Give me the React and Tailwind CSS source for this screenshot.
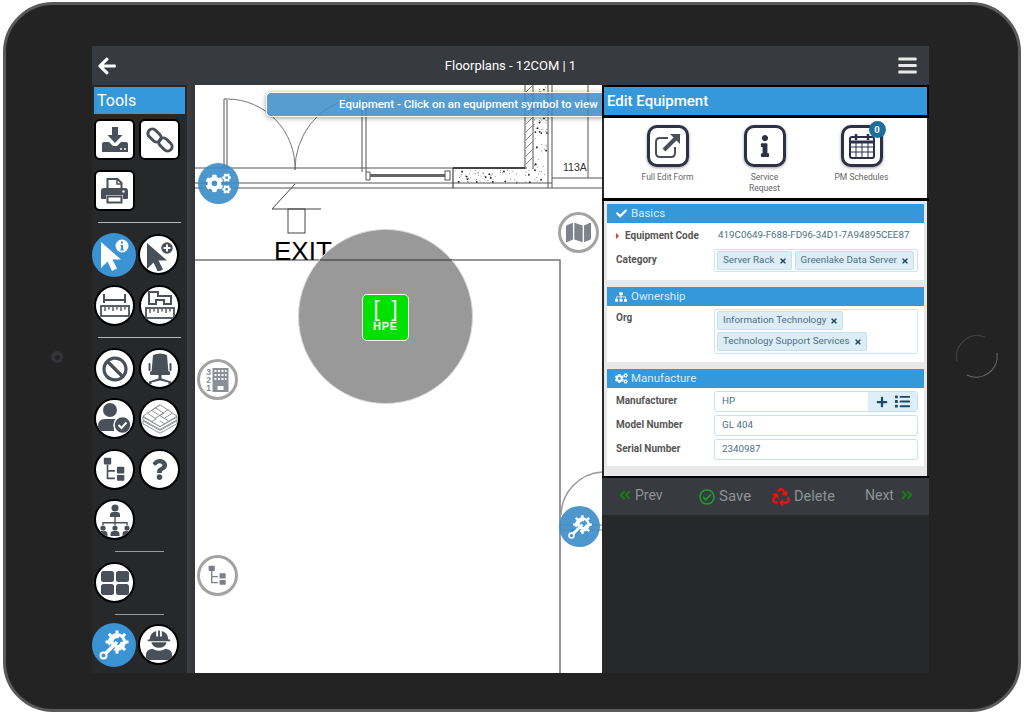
import {
  FaAngleDoubleLeft,
  FaAngleDoubleRight,
  FaArrowLeft,
  FaBan,
  FaBars,
  FaCheck,
  FaCogs,
  FaInfo,
  FaList,
  FaMap,
  FaPlus,
  FaQuestion,
  FaRecycle,
  FaRegCheckCircle,
  FaSitemap,
  FaTimes,
} from "react-icons/fa";

const iconGray = "#4a505a";
const cursorPath = "M1 1v26l6.500-6.500L12 30l5-2.500-4.500-9H21z";

const GearWrench = ({ size = 30 }) => (
  <svg width={size} height={size} viewBox="0 0 32 32" fill="none">
    <g stroke="#fff">
      {[0, 45, 90, 135, 180, 225, 270, 315].map((a) => (
        <rect key={a} x="17.500" y="1.500" width="3" height="4" fill="#fff" stroke="none" transform={`rotate(${a} 19 13)`} />
      ))}
      <circle cx="19" cy="13" r="7.500" strokeWidth="3" />
      <path d="M5 27 L19 13" stroke="#3a93d3" strokeWidth="6" />
      <path d="M7 25 L19 13" strokeWidth="3.400" />
      <path d="M21 8 A5 5 0 1 0 24 13" strokeWidth="3" />
      <circle cx="5.500" cy="26.500" r="3" strokeWidth="2" fill="#3a93d3" />
    </g>
  </svg>
);

const SaveDrive = () => (
  <svg width="28" height="28" viewBox="0 0 28 28" fill={iconGray}>
    <path d="M11 1h6v8h4.500L14 17 6.500 9H11z" />
    <path d="M1 18q0-2 2-2h5l4 4h4l4-4h5q2 0 2 2v8H1z" />
    <circle cx="20" cy="23" r="1" fill="#fff" />
    <circle cx="24" cy="23" r="1" fill="#fff" />
  </svg>
);

const ChainLink = () => (
  <svg width="28" height="28" viewBox="0 0 28 28" fill="none" stroke={iconGray} strokeWidth="3">
    <rect x="1" y="5" width="15" height="9" rx="4.500" transform="rotate(45 8.500 9.500)" />
    <rect x="12" y="14" width="15" height="9" rx="4.500" transform="rotate(45 19.500 18.500)" />
  </svg>
);

const Printer = () => (
  <svg width="27" height="27" viewBox="0 0 27 27" fill="none">
    <path d="M6.500 12V2h10l4 4v6" stroke={iconGray} strokeWidth="2" />
    <path d="M16 2v5h5" stroke={iconGray} strokeWidth="1.500" />
    <path d="M3 11h21q3 0 3 3v7q0 1-1 1h-4v-4H5v4H1q-1 0-1-1v-7q0-3 3-3z" fill={iconGray} />
    <path d="M6.500 19.500h14v6h-14z" stroke={iconGray} strokeWidth="2" />
    <circle cx="22.500" cy="14.500" r="1.200" fill="#fff" />
  </svg>
);

const CursorInfo = () => (
  <svg width="34" height="34" viewBox="0 0 34 34" fill="#fff">
    <path d={cursorPath} transform="translate(3 3)" />
    <circle cx="25" cy="8" r="6.500" />
    <path d="M24 3.500h2v2h-2zM23.500 7H26v4.500h1v1h-4v-1h1V8h-.5z" fill="#3a93d3" />
  </svg>
);

const CursorAdd = () => (
  <svg width="32" height="32" viewBox="0 0 32 32" fill={iconGray}>
    <path d={cursorPath} transform="translate(3 3)" />
    <circle cx="24" cy="9" r="6.500" stroke="#fff" strokeWidth="1.500" />
    <path d="M23 5.500h2V8h2.500v2H25v2.500h-2V10h-2.500V8H23z" fill="#fff" />
  </svg>
);

const Ruler = () => (
  <svg width="30" height="12" viewBox="0 0 30 12" fill="none" stroke={iconGray}>
    <rect x="1" y="1" width="28" height="10" strokeWidth="1.800" />
    <path d="M5 2v4M9 2v2.500M13 2v4M17 2v2.500M21 2v4M25 2v2.500" strokeWidth="1.400" />
  </svg>
);

const RulerLine = () => (
  <div className="flex flex-col items-center gap-[2px] -mt-[1px]">
    <svg width="23" height="9" viewBox="0 0 23 9" fill="none" stroke={iconGray} strokeWidth="2">
      <path d="M1 0v9M22 0v9M1 6h21" />
    </svg>
    <Ruler />
  </div>
);

const RulerPlan = () => (
  <div className="flex flex-col items-center gap-[2px] -mt-[1px]">
    <svg width="24" height="14" viewBox="0 0 24 14" fill="none" stroke={iconGray} strokeWidth="2">
      <path d="M1 1h9v4h13v8h-7V9H8v4H1z" />
    </svg>
    <Ruler />
  </div>
);

const Chair = () => (
  <svg width="24" height="32" viewBox="0 0 24 32" fill={iconGray}>
    <path d="M5 2q7-3 14 0l1.500 18h-17z" />
    <rect x="0.500" y="10" width="2" height="8" rx="1" />
    <rect x="21.500" y="10" width="2" height="8" rx="1" />
    <rect x="2" y="18" width="20" height="4" rx="1.500" />
    <rect x="10.500" y="22" width="3" height="4" />
    <path d="M12 25 L1 28.500V31h2.500v-1.500l8.500-2 8.500 2V31H23v-2.500z" />
  </svg>
);

const UserCheck = () => (
  <svg width="35" height="33" viewBox="0 0 35 33" fill={iconGray}>
    <circle cx="13" cy="8" r="7" />
    <path d="M1 29v-5q0-7 7-7h9q4 0 5 2a10 10 0 0 0-5 10z" />
    <circle cx="25.500" cy="23" r="8.500" stroke="#fff" strokeWidth="1.500" />
    <path d="M21.500 23l3 3 5-5.500" fill="none" stroke="#fff" strokeWidth="2" />
  </svg>
);

const Tiles = () => (
  <svg width="36" height="32" viewBox="0 0 38 32" fill="#fff" stroke="#8a8d92" strokeWidth="1">
    <path d="M1 18l18 10 18-10v3L19 31 1 21z" />
    <path d="M1 14l18 10 18-10v3L19 27 1 17z" />
    <path d="M19 1l18 12-18 11L1 13z" />
    <path d="M10 7l18 11M19 1l-9 6M14 4l9 6-9 5M6 10l9 6-5 3M19 12l9-6M24 15l8-5M19 18l5 3" fill="none" />
  </svg>
);

const Tree = ({ color = iconGray, scale = 1 }) => (
  <svg width={28 * scale} height={30 * scale} viewBox="0 0 28 30" fill={color}>
    <rect x="1" y="1" width="9" height="8" rx="1" />
    <path d="M4.500 9h2v7h8v2h-8v7h8v2h-10z" />
    <rect x="17" y="12" width="9" height="8" rx="1" />
    <rect x="17" y="22" width="9" height="7" rx="1" />
  </svg>
);

const OrgChart = () => (
  <svg width="34" height="34" viewBox="0 0 34 34" fill={iconGray}>
    <circle cx="17" cy="5" r="3.500" />
    <path d="M12 14v-2q0-3 3-3h4q3 0 3 3v2z" />
    <path d="M16.300 14h1.400v5h12v3h-1.400v-1.600h-10.600V22h-1.400v-1.600H5.700V22H4.300v-3h12z" />
    {[5, 17, 29].map((x) => (
      <g key={x}>
        <circle cx={x} cy="25" r="2.600" />
        <path d={`M${x - 4.500} 33v-2q0-3 3-3h3q3 0 3 3v2z`} />
      </g>
    ))}
  </svg>
);

const Quad = () => (
  <svg width="28" height="24" viewBox="0 0 28 24" fill={iconGray}>
    <rect x="0" y="0" width="13" height="11" rx="2.500" />
    <rect x="15" y="0" width="13" height="11" rx="2.500" />
    <rect x="0" y="13" width="13" height="11" rx="2.500" />
    <rect x="15" y="13" width="13" height="11" rx="2.500" />
  </svg>
);

const HardHat = () => (
  <svg width="30" height="32" viewBox="0 0 32 34" fill={iconGray}>
    <path d="M6 11a10 10 0 0 1 7-9v6h2V1.500h2V8h2V2a10 10 0 0 1 7 9h2v2H4v-2z" />
    <path d="M8 14h16a8 6 0 0 1-16 0z" />
    <path d="M2 33v-5q0-6 7-7 7 4 14 0 7 1 7 7v5z" />
  </svg>
);

const Building = () => (
  <div className="flex items-center gap-[1px]">
    <div className="flex flex-col text-[8.500px] leading-[8px] font-bold text-[#8a8a8a] font-['Liberation_Sans',sans-serif]">
      <span>3</span>
      <span>2</span>
      <span>1</span>
    </div>
    <svg width="17" height="24" viewBox="0 0 16 24" fill="#8a8f98">
      <path fillRule="evenodd" d="M0 0h16v24H0zM5 18v4h6v-4z" />
      <path d="M2 2h2v2H2zM5.500 2h2v2h-2zM9 2h2v2H9zM12.500 2H14v2h-1.500zM2 6h2v2H2zM5.500 6h2v2h-2zM9 6h2v2H9zM12.500 6H14v2h-1.500zM2 10h2v2H2zM5.500 10h2v2h-2zM9 10h2v2H9zM12.500 10H14v2h-1.500z" fill="#fff" />
    </svg>
  </div>
);

const EditFormIcon = () => (
  <svg width="28" height="28" viewBox="0 0 28 28" fill="none" stroke={iconGray}>
    <path d="M14 6H6q-4 0-4 4v11q0 4 4 4h11q4 0 4-4v-6" strokeWidth="2" />
    <path d="M10 18L22 6" strokeWidth="4" />
    <path d="M16 2h10v10z" fill={iconGray} stroke="none" />
  </svg>
);

const SquareBtn = ({ children }) => (
  <div className="w-[41px] h-[41px] shrink-0 rounded-[6px] bg-white border-2 border-black flex items-center justify-center">
    {children}
  </div>
);

const CircleBtn = ({ children, blue }) =>
  blue ? (
    <div className="w-[44px] h-[44px] -mx-[2px] shrink-0 rounded-full bg-[#3a93d3] flex items-center justify-center relative z-10">
      {children}
    </div>
  ) : (
    <div className="w-[41px] h-[41px] shrink-0 rounded-full bg-white border-2 border-black flex items-center justify-center overflow-hidden">
      {children}
    </div>
  );

const Row = ({ className = "", children }) => (
  <div className={`flex gap-[4px] items-center ${className}`}>{children}</div>
);

const ToolsPanel = () => (
  <div className="w-[103px] shrink-0 flex bg-[#27282a]">
    <div className="w-[95px] pl-[2px]">
      <div className="mt-[2px] h-[27px] w-[91px] bg-[#3498db] text-white text-[16px] leading-[27px] pl-[3px]">
        Tools
      </div>
      <Row className="mt-[5px]">
        <SquareBtn>
          <SaveDrive />
        </SquareBtn>
        <SquareBtn>
          <ChainLink />
        </SquareBtn>
      </Row>
      <Row className="mt-[10px]">
        <SquareBtn>
          <Printer />
        </SquareBtn>
      </Row>
      <div className="mt-[11px] ml-[4px] w-[83px] h-px bg-[#b5b5b5]" />
      <Row className="mt-[10px] h-[43px]">
        <CircleBtn blue>
          <CursorInfo />
        </CircleBtn>
        <CircleBtn>
          <CursorAdd />
        </CircleBtn>
      </Row>
      <Row className="mt-[9px]">
        <CircleBtn>
          <RulerLine />
        </CircleBtn>
        <CircleBtn>
          <RulerPlan />
        </CircleBtn>
      </Row>
      <div className="mt-[11px] ml-[4px] w-[83px] h-px bg-[#b5b5b5]" />
      <Row className="mt-[10px]">
        <CircleBtn>
          <FaBan size={26} color={iconGray} />
        </CircleBtn>
        <CircleBtn>
          <Chair />
        </CircleBtn>
      </Row>
      <Row className="mt-[9px]">
        <CircleBtn>
          <UserCheck />
        </CircleBtn>
        <CircleBtn>
          <Tiles />
        </CircleBtn>
      </Row>
      <Row className="mt-[10px]">
        <CircleBtn>
          <Tree scale={0.82} />
        </CircleBtn>
        <CircleBtn>
          <FaQuestion size={21} color={iconGray} />
        </CircleBtn>
      </Row>
      <Row className="mt-[9px]">
        <CircleBtn>
          <OrgChart />
        </CircleBtn>
      </Row>
      <div className="mt-[11px] ml-[21px] w-[49px] h-px bg-[#9a9a9a]" />
      <Row className="mt-[10px]">
        <CircleBtn>
          <Quad />
        </CircleBtn>
      </Row>
      <div className="mt-[11px] ml-[21px] w-[49px] h-px bg-[#9a9a9a]" />
      <Row className="mt-[8px] h-[43px]">
        <CircleBtn blue>
          <GearWrench size={32} />
        </CircleBtn>
        <CircleBtn>
          <HardHat />
        </CircleBtn>
      </Row>
    </div>
    <div className="w-[8px] bg-gradient-to-r from-[#3d3f42] to-[#33353a]" />
  </div>
);

const noise = (n) => {
  const v = Math.sin(n * 12.9898) * 43758.5453;
  return v - Math.floor(v);
};

const speckles = Array.from({ length: 130 }, (_, i) => {
  const inWall = i % 2 === 0;
  const a = noise(i + 1);
  const b = noise(i + 500);
  const big = noise(i + 900) > 0.75;
  return inWall
    ? { x: 534 + a * 13, y: 86 + b * 96, r: big ? 0.9 : 0.45 }
    : { x: 455 + a * 76, y: 170 + b * 13, r: big ? 0.9 : 0.45 };
});

const FloorDrawing = () => (
  <svg className="absolute inset-0 w-full h-full" viewBox="195 85 407 588" fill="none" stroke="#555" strokeWidth="1">
    <path d="M224 99v69M227 100v68M224 99h3" />
    <path d="M227 99 A68 69 0 0 1 295 170" stroke="#777" />
    <path d="M295 170 A68 72 0 0 1 350 99" stroke="#777" />
    <path d="M195 168h332M195 183h357M195 188h407" />
    <path d="M362 100v72M366 100v72" />
    <path d="M366 172v8h4v-8z" />
    <path d="M370 175.500h75" stroke="#666" strokeWidth="3" />
    <rect x="445" y="171" width="5" height="9" />
    <path d="M453 168h72" stroke="#222" strokeWidth="1.500" />
    <path d="M453 168v20" stroke="#222" />
    <path d="M525 85v84M533 85v84M548 85v103M552 85v103M588 85v93M552 178h50" />
    <path d="M526 92l7-7M526 100l7-7M526 108l7-7M526 116l7-7M526 124l7-7M526 132l7-7M526 140l7-7M526 148l7-7M526 156l7-7M526 164l7-7" stroke="#888" />
    {speckles.map((s, i) => (
      <circle key={i} cx={s.x} cy={s.y} r={s.r} fill="#222" stroke="none" />
    ))}
    <path d="M295 184L272 209h49" stroke="#444" />
    <rect x="288" y="209" width="17" height="24" stroke="#444" />
    <path d="M195 260H560V673" stroke="#777" strokeWidth="1.500" />
    <path d="M561 515 A44 44 0 0 1 602 472" stroke="#999" strokeWidth="1.500" />
    <path d="M561 525h41M561 530h41" stroke="#888" />
  </svg>
);

const MapBubble = ({ className, blue, children }) => (
  <div
    className={`absolute w-[41px] h-[41px] rounded-full flex items-center justify-center ${
      blue ? "bg-[#3a8cc8]/90" : "bg-white border-[3px] border-[#a3a3a3]"
    } ${className}`}
  >
    {children}
  </div>
);

const Canvas = () => (
  <div className="relative flex-1 bg-white overflow-hidden">
    <FloorDrawing />
    <div className="absolute left-[368px] top-[76px] text-[10.500px] leading-[12px] text-[#333] font-['Liberation_Sans',sans-serif]">
      113A
    </div>
    <div className="absolute left-[79px] top-[153px] text-[26px] leading-[27px] text-black font-['Liberation_Sans',sans-serif]">
      EXIT
    </div>
    <div className="absolute left-[103px] top-[144px] w-[175px] h-[175px] rounded-full bg-[#999999] border border-[#d5d5d5]" />
    <svg className="absolute left-[125px] top-[174px]" width="132" height="2">
      <path d="M0 1h132" stroke="#555" strokeWidth="1.500" />
    </svg>
    <div className="absolute left-[167px] top-[209px] w-[47px] h-[47px] rounded-[5px] bg-[#00e100] border border-white flex flex-col items-center text-white font-['Liberation_Sans',sans-serif]">
      <div className="flex gap-[12px] text-[22px] leading-[23px] mt-[2px] font-light">
        <span>[</span>
        <span>]</span>
      </div>
      <div className="text-[11px] leading-[11px] font-bold mt-[1px] tracking-[0.8px]">HPE</div>
    </div>
    <div className="absolute left-[71px] top-[7px] w-[350px] h-[25px] rounded-[5px] border border-white bg-[#3a8cc8]/85 shadow-[0_1px_5px_rgba(0,0,0,0.4)] pl-[72px] text-white font-medium text-[11.500px] leading-[23px]">
      Equipment - Click on an equipment symbol to view
    </div>
    <MapBubble blue className="left-[3px] top-[78px]">
      <FaCogs size={25} color="#fff" />
    </MapBubble>
    <MapBubble className="left-[363px] top-[127px]">
      <FaMap size={25} color="#7d828c" />
    </MapBubble>
    <MapBubble className="left-[2px] top-[274px]">
      <Building />
    </MapBubble>
    <MapBubble className="left-[2px] top-[470px]">
      <Tree color="#7a7f88" scale={0.68} />
    </MapBubble>
    <MapBubble blue className="left-[364px] top-[421px]">
      <GearWrench size={26} />
    </MapBubble>
  </div>
);

const ActionBtn = ({ icon, label, badge }) => (
  <div className="w-[97px] flex flex-col items-center">
    <div className="relative w-[42px] h-[42px] rounded-[10px] border-[3px] border-[#2d3148] bg-white flex items-center justify-center shadow-[0_1px_3px_rgba(0,0,0,0.4)]">
      {icon}
      {badge && (
        <div className="absolute -top-[7px] -right-[6px] w-[17px] h-[17px] rounded-full bg-[#1c6e9e] text-white text-[9.500px] font-bold leading-[17px] text-center">
          {badge}
        </div>
      )}
    </div>
    <div className="mt-[5px] w-[60px] text-center text-[8.500px] leading-[11px] text-[#666]">{label}</div>
  </div>
);

const SectionHead = ({ icon, title }) => (
  <div className="h-[19px] bg-[#3498db] flex items-center pl-[4px] text-[#d9ecf8] text-[11.500px]">
    <span className="w-[20px] flex justify-center">{icon}</span>
    <span>{title}</span>
  </div>
);

const Tag = ({ label }) => (
  <div className="h-[19px] pl-[5px] pr-[4px] flex items-center gap-[4px] whitespace-nowrap rounded-[2px] bg-[#dcedf6] border border-[#c6e0ee] text-[9.800px] text-[#4c7186]">
    {label}
    <FaTimes size={8} color="#1c4a66" />
  </div>
);

const Label = ({ children }) => (
  <div className="w-[98px] pl-[9px] shrink-0 text-[10px] font-bold text-[#555]">{children}</div>
);

const InputBox = ({ value, className = "" }) => (
  <div className={`h-[21px] w-[204px] rounded-[3px] border border-[#c5e0ef] bg-white pl-[7px] text-[9.800px] leading-[18px] text-[#4c7186] ${className}`}>
    {value}
  </div>
);

const EditPanel = () => (
  <div className="w-[327px] shrink-0 bg-[#27282a] flex flex-col">
    <div className="h-[33px] bg-black px-[2px] pt-[2px]">
      <div className="h-[28px] bg-[#3498db] text-white text-[15px] font-medium leading-[28px] pl-[3px]">Edit Equipment</div>
    </div>
    <div className="mx-[2px] h-[80px] bg-white flex pt-[7px] pl-[15px]">
      <ActionBtn icon={<EditFormIcon />} label="Full Edit Form" />
      <ActionBtn icon={<FaInfo size={22} color="#2d3148" />} label="Service Request" />
      <ActionBtn
        badge="0"
        icon={
          <svg width="26" height="26" viewBox="0 0 26 26" fill="none" stroke="#2d3148">
            <rect x="1" y="4" width="24" height="21" rx="2" strokeWidth="2" />
            <path d="M1 9h24" strokeWidth="3" />
            <path d="M7 1v6M19 1v6" strokeWidth="2.500" />
            <path d="M1 14h24M1 19h24M7 10v14M13 10v14M19 10v14" strokeWidth="1" />
          </svg>
        }
        label="PM Schedules"
      />
    </div>
    <div className="h-[3px] bg-black" />
    <div className="mx-[2px] h-[275px] bg-[#e8e8e8] px-[3px] pt-[3px]">
      <SectionHead icon={<FaCheck size={11} color="#fff" />} title="Basics" />
      <div className="bg-white h-[57px]">
        <div className="flex pt-[5px] items-center">
          <div className="w-[98px] shrink-0 pl-[9px] text-[10px] font-bold text-[#555] flex items-center gap-[6px] whitespace-nowrap">
            <span className="w-0 h-0 border-y-[3px] border-y-transparent border-l-[3px] border-l-[#e53935]" />
            Equipment Code
          </div>
          <div className="ml-[13px] text-[9.800px] text-[#4c7186] whitespace-nowrap">419C0649-F688-FD96-34D1-7A94895CEE87</div>
        </div>
        <div className="flex mt-[6px]">
          <Label>
            <div className="mt-[3px] whitespace-nowrap">Category</div>
          </Label>
          <div className="w-[204px] h-[23px] flex gap-[3px] pl-[2px] pt-[1px] border border-[#cde5f2] rounded-[2px] ml-[9px]">
            <Tag label="Server Rack" />
            <Tag label="Greenlake Data Server" />
          </div>
        </div>
      </div>
      <div className="h-[7px]" />
      <SectionHead icon={<FaSitemap size={12} color="#fff" />} title="Ownership" />
      <div className="bg-white h-[56px] pt-[3px] flex">
        <Label>
          <div className="mt-[1px]">Org</div>
        </Label>
        <div className="ml-[9px] w-[204px] h-[45px] flex flex-col items-start gap-[2px] pl-[2px] pt-[1px] border border-[#cde5f2] rounded-[2px]">
          <Tag label="Information Technology" />
          <Tag label="Technology Support Services" />
        </div>
      </div>
      <div className="h-[7px]" />
      <SectionHead icon={<FaCogs size={13} color="#fff" />} title="Manufacture" />
      <div className="bg-white h-[78px] pt-[3px] flex flex-col gap-[3px]">
        <div className="flex items-center">
          <Label>
            <div className="-mt-[2px]">Manufacturer</div>
          </Label>
          <div className="ml-[9px] w-[204px] h-[21px] flex rounded-[3px] border border-[#c5e0ef] text-[9.800px] text-[#4c7186]">
            <div className="flex-1 pl-[7px] leading-[18px]">HP</div>
            <div className="w-[49px] bg-[#ddeef7] rounded-r-[3px] flex items-center justify-center gap-[7px]">
              <FaPlus size={12} color="#1c4a66" />
              <FaList size={15} color="#1c4a66" />
            </div>
          </div>
        </div>
        <div className="flex items-center">
          <Label>
            <div className="-mt-[2px]">Model Number</div>
          </Label>
          <InputBox value="GL 404" className="ml-[9px]" />
        </div>
        <div className="flex items-center">
          <Label>
            <div className="-mt-[3px]">Serial Number</div>
          </Label>
          <InputBox value="2340987" className="ml-[9px]" />
        </div>
      </div>
    </div>
    <div className="h-[2px] bg-black" />
    <div className="h-[37px] bg-[#373a3e] flex items-center text-[14px] text-[#8e9296] pl-[16px]">
      <div className="flex items-center gap-[3px] -mt-[3px] w-[81px]">
        <FaAngleDoubleLeft size={14} color="#1a7a1a" />
        Prev
      </div>
      <div className="flex items-center gap-[4px] w-[73px] text-[15px]">
        <FaRegCheckCircle size={16} color="#1f9d2e" />
        Save
      </div>
      <div className="flex items-center gap-[4px] w-[93px] text-[14.500px]">
        <FaRecycle size={18} color="#f01010" />
        Delete
      </div>
      <div className="flex items-center gap-[6px] -mt-[3px]">
        Next
        <FaAngleDoubleRight size={14} color="#1a7a1a" />
      </div>
    </div>
    <div className="flex-1" />
  </div>
);

const App = () => (
  <div className="relative w-[1024px] h-[715px] bg-white overflow-hidden font-['Roboto',sans-serif]">
    <div className="ml-[3px] mt-[2px] w-[1018px] h-[710px] rounded-[50px] bg-[#232323] border-[3px] border-[#5a5a5a] pt-[41px] pl-[86px]">
      <div className="w-[837px] h-[627px] flex flex-col">
        <div className="h-[39px] shrink-0 bg-[#373a3e] flex items-center justify-between pl-[5px] pr-[11px] text-white">
          <FaArrowLeft size={20} color="#fff" />
          <div className="text-[13px] pl-[7px]">Floorplans - 12COM | 1</div>
          <FaBars size={21} color="#e8e8e8" />
        </div>
        <div className="flex flex-1 min-h-0">
          <ToolsPanel />
          <Canvas />
          <EditPanel />
        </div>
      </div>
    </div>
    {/* camera and home button on the tablet frame */}
    <div className="absolute left-[51px] top-[351px] w-[12px] h-[12px] rounded-full bg-[#33343a] flex items-center justify-center">
      <div className="w-[5px] h-[5px] rounded-full bg-[#232323]" />
    </div>
    <svg className="absolute left-[953px] top-[333px]" width="48" height="48" viewBox="0 0 48 48" fill="none" strokeWidth="1.200">
      <path d="M4 28A21 21 0 0 1 32 4" stroke="#3e3e3e" />
      <path d="M44 20A21 21 0 0 1 14 42" stroke="#666" />
    </svg>
  </div>
);

export default App;
